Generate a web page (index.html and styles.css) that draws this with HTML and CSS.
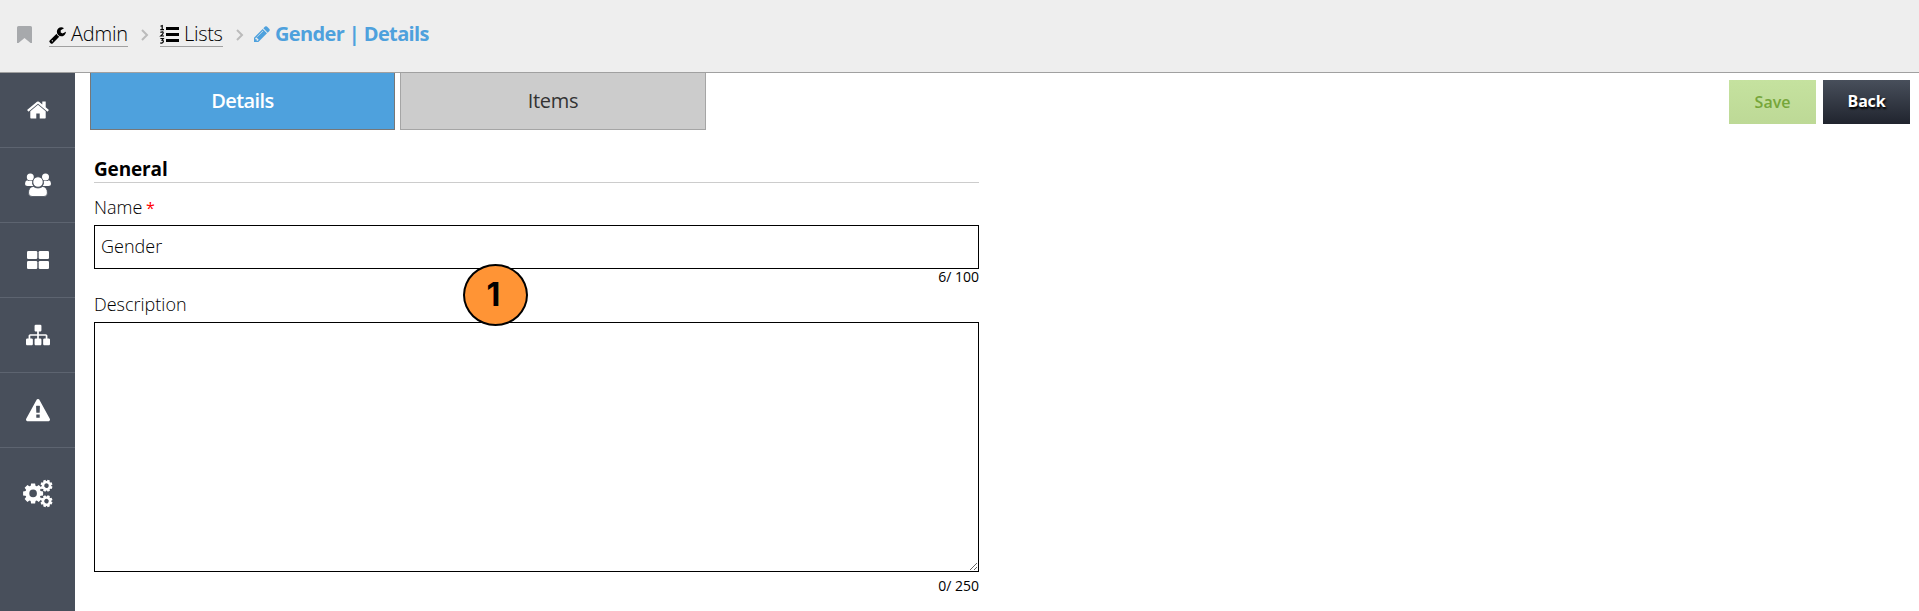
FILE: index.html
```html
<!DOCTYPE html>
<html lang="en">
<head>
<meta charset="utf-8">
<title>Gender | Details</title>
<link rel="stylesheet" href="styles.css">
</head>
<body>
<header class="topbar">
  <svg class="bookmark" viewBox="0 0 15 17"><path d="M1.5 0h12Q15 0 15 1.500V17h-1.500L7.500 12 1.500 17H0V1.500Q0 0 1.500 0z"/></svg>
  <nav class="crumbs">
    <a class="crumb crumb-admin"><svg class="ico" viewBox="64 0 1664 1792"><path d="M448 1472q0-26-19-45t-45-19-45 19-19 45 19 45 45 19 45-19 19-45zm644-420l-682 682q-37 37-90 37-52 0-91-37l-106-108q-38-36-38-90 0-53 38-91l681-681q39 98 114.500 173.500t173.500 114.500zm634-435q0 39-23 106-47 134-164.500 217.500t-258.500 83.500q-185 0-316.500-131.500t-131.500-316.500 131.500-316.500 316.500-131.500q58 0 121.500 16.500t107.500 46.500q16 11 16 28t-16 28l-293 169v224l193 107q5-3 79-48.500t135.500-81 70.500-35.500q15 0 23.500 10t8.500 25z"/></svg><span>Admin</span></a>
    <svg class="chev" viewBox="0 0 7 12"><path d="M1 1l5 5-5 5"/></svg>
    <a class="crumb crumb-lists"><svg class="ico-list" viewBox="0 0 19 19"><path d="M6 2h13v3H6zM6 8h13v3H6zM6 14h13v3H6z"/><path class="num" d="M.5 1.300L2.200.7V4.500M.3 4.700H4M.4 7.400Q3.400 6.200 3.200 8 3 9 .8 11H4M.4 13.500H3.300L2 15.200Q3.600 15.300 3.300 16.800 2.600 18.600.3 17.900"/></svg><span>Lists</span></a>
    <svg class="chev" viewBox="0 0 7 12"><path d="M1 1l5 5-5 5"/></svg>
    <span class="crumb-current"><svg class="ico-pencil" viewBox="128 128 1536 1536"><path d="M491 1536l91-91-235-235-91 91v107h128v128h107zm523-928q0-22-22-22-10 0-17 7l-542 542q-7 7-7 17 0 22 22 22 10 0 17-7l542-542q7-7 7-17zm-54-192l416 416-832 832h-416v-416zm683 96q0 53-37 90l-166 166-416-416 166-165q36-38 90-38 53 0 91 38l235 234q37 39 37 91z"/></svg><span>Gender | Details</span></span>
  </nav>
</header>
<div class="shell">
  <aside class="sidebar">
    <a class="side-item"><svg class="side-ico" viewBox="0 0 1792 1792"><path d="M1472 992v480q0 26-19 45t-45 19h-384v-384h-256v384h-384q-26 0-45-19t-19-45v-480q0-1 .5-3t.5-3l575-474 575 474q1 2 1 6zm223-69l-62 74q-8 9-21 11h-3q-13 0-21-7l-692-577-692 577q-12 8-24 7-13-2-21-11l-62-74q-8-10-7-23.500t11-21.500l719-599q32-26 76-26t76 26l244 204v-195q0-14 9-23t23-9h192q14 0 23 9t9 23v408l219 182q10 8 11 21.500t-7 23.500z"/></svg></a>
    <a class="side-item"><svg class="side-users" viewBox="0 0 26 24"><circle cx="5.300" cy="4" r="3.500"/><circle cx="20.500" cy="4" r="3.500"/><path d="M2 7.200Q4.500 8.800 7.300 7.600 6.600 11 8.300 13H2.500Q0 13 0 11 0 8 2 7.200zM24 7.200Q21.500 8.800 18.700 7.600 19.400 11 17.700 13H23.500Q26 13 26 11 26 8 24 7.200z"/><circle class="cut" cx="13" cy="9" r="5.200"/><path class="cut" d="M8.300 13.400Q13 16.600 17.700 13.400 22.400 14 22.400 20 22.400 23.500 19 23.500H7Q3.500 23.500 3.500 20 3.500 14 8.300 13.400z"/></svg></a>
    <a class="side-item"><svg class="side-grid" viewBox="0 0 22 18"><rect width="10.300" height="8" rx="1.300"/><rect x="11.700" width="10.300" height="8" rx="1.300"/><rect y="10" width="10.300" height="8" rx="1.300"/><rect x="11.700" y="10" width="10.300" height="8" rx="1.300"/></svg></a>
    <a class="side-item"><svg class="side-ico" viewBox="0 0 1792 1792"><path d="M1792 1248v320q0 40-28 68t-68 28h-320q-40 0-68-28t-28-68v-320q0-40 28-68t68-28h96v-192h-512v192h96q40 0 68 28t28 68v320q0 40-28 68t-68 28h-320q-40 0-68-28t-28-68v-320q0-40 28-68t68-28h96v-192h-512v192h96q40 0 68 28t28 68v320q0 40-28 68t-68 28h-320q-40 0-68-28t-28-68v-320q0-40 28-68t68-28h96v-192q0-52 38-90t90-38h512v-192h-96q-40 0-68-28t-28-68v-320q0-40 28-68t68-28h320q40 0 68 28t28 68v320q0 40-28 68t-68 28h-96v192h512q52 0 90 38t38 90v192h96q40 0 68 28t28 68z"/></svg></a>
    <a class="side-item side-item-alert"><svg class="side-ico" viewBox="0 0 1792 1792"><path d="M1024 1375v-190q0-14-9.500-23.500t-22.500-9.500h-192q-13 0-22.500 9.500t-9.500 23.500v190q0 14 9.500 23.500t22.500 9.500h192q13 0 22.500-9.500t9.500-23.500zm-2-374l18-459q0-12-10-19-13-11-24-11h-220q-11 0-24 11-10 7-10 21l17 457q0 10 10 16.500t24 6.500h185q14 0 23.500-6.500t10.500-16.500zm-14-934l768 1408q35 63-2 126-17 29-46.500 46t-63.500 17h-1536q-34 0-63.500-17t-46.500-46q-37-63-2-126l768-1408q17-31 47-49t65-18 65 18 47 49z"/></svg></a>
    <a class="side-item side-item-tall"><svg class="side-cogs" viewBox="0 0 30 27">
      <defs><g id="gear"><path d="M-2-10h4l.7 4h-5.400zM-2 10h4l.7-4h-5.400z"/><path transform="rotate(45)" d="M-2-10h4l.7 4h-5.400zM-2 10h4l.7-4h-5.400z"/><path transform="rotate(90)" d="M-2-10h4l.7 4h-5.400zM-2 10h4l.7-4h-5.400z"/><path transform="rotate(135)" d="M-2-10h4l.7 4h-5.400zM-2 10h4l.7-4h-5.400z"/><circle r="5.800" class="ring"/></g></defs>
      <use href="#gear" transform="translate(10.100 13.400)"/><use href="#gear" transform="translate(23.500 5.700) rotate(22) scale(.6)"/><use href="#gear" transform="translate(23.500 21.200) rotate(22) scale(.6)"/></svg></a>
  </aside>
  <main class="content">
    <div class="toolbar">
      <div class="tabs"><a class="tab tab-active">Details</a><a class="tab">Items</a></div>
      <div class="actions"><button class="btn btn-save">Save</button><button class="btn btn-back">Back</button></div>
    </div>
    <form class="form">
      <h2 class="section">General</h2>
      <label class="label label-name" for="name">Name <span class="req">*</span></label>
      <input class="input" id="name" value="Gender">
      <div class="count count-name">6/ 100</div>
      <label class="label label-desc" for="desc">Description</label>
      <textarea class="area" id="desc"></textarea>
      <div class="count count-desc">0/ 250</div>
      <div class="marker">1</div>
    </form>
  </main>
</div>
</body>
</html>
```
FILE: styles.css
```css
* { box-sizing: border-box; }
html, body { height: 100%; }
body { margin: 0; display: flex; flex-direction: column; background: #fff; color: #000; font-family: "Open Sans", "Noto Sans", sans-serif; font-size: 18px; overflow: hidden; }
svg { display: block; flex: none; overflow: visible; }
.topbar { height: 73px; flex: none; background: #eee; border-bottom: 1px solid #a0a0a0; display: flex; align-items: flex-start; padding-left: 17px; }
.bookmark { width: 15px; height: 17px; margin-top: 26px; fill: #a7a9ac; }
.crumbs { display: flex; align-items: flex-start; margin: 21px 0 0 17px; font-size: 20px; line-height: 26px; }
.crumb { display: flex; height: 26px; border-bottom: 1px solid #a0a0a0; font-weight: 330; }
.crumb-admin { width: 79px; gap: 5px; letter-spacing: -0.2px; }
.crumb-lists { width: 63px; gap: 5px; letter-spacing: -0.3px; }
.ico { width: 17px; height: 18px; margin-top: 5px; }
.ico-list { width: 19px; height: 19px; margin-top: 4px; }
.num { fill: none; stroke: #000; stroke-width: 1.2; }
.chev { width: 7px; height: 12px; margin: 8px 12px 0 13px; fill: none; stroke: #bbb; stroke-width: 2; }
.crumb-current { display: flex; gap: 5px; margin-left: -1px; color: #4ea1dd; font-weight: 700; letter-spacing: -0.63px; }
.ico-pencil { width: 16px; height: 16px; margin-top: 5px; fill: #4ea1dd; }
.shell { flex: 1; display: flex; min-height: 0; }
.sidebar { width: 75px; flex: none; background: #484f5b; }
.side-item { height: 75px; border-bottom: 1px solid #5d6470; display: flex; align-items: center; justify-content: center; fill: #fff; }
.side-item-alert { padding-top: 2px; }
.side-item-tall { height: 91px; border-bottom: 0; }
.side-ico { width: 24px; height: 24px; }
.side-users { width: 26px; height: 24px; }
.cut { stroke: #484f5b; stroke-width: .8; }
.side-grid { width: 22px; height: 18px; }
.side-cogs { width: 30px; height: 27px; }
.ring { fill: none; stroke: #fff; stroke-width: 4; }
.content { flex: 1; padding: 0 9px 0 15px; }
.toolbar { display: flex; justify-content: space-between; height: 57px; }
.tabs { display: flex; gap: 5px; }
.tab { width: 306px; height: 57px; border: 1px solid #a5a5a5; border-top: 0; background: #ccc; color: #333; font-size: 20px; font-weight: 500; line-height: 55px; letter-spacing: -0.3px; text-align: center; }
.tab-active { width: 305px; background: #4ea1dd; border-color: #777; color: #fff; font-weight: 600; letter-spacing: -0.6px; }
.actions { display: flex; gap: 7px; padding-top: 7px; }
.btn { width: 87px; height: 44px; padding: 0 0 1px; border: 0; font: 600 16px/42px "Open Sans", sans-serif; }
.btn-save { background: linear-gradient(#c5e29f, #bdd996); color: #76a63a; }
.btn-back { background: linear-gradient(#484f5b, #20242e); color: #fff; padding-bottom: 2px; font-weight: 700; letter-spacing: -0.2px; text-shadow: 1px 2px 2px #000; }
.form { position: relative; width: 885px; margin-left: 4px; display: flex; flex-direction: column; }
.section { margin: 26px 0 0; height: 27px; border-bottom: 1px solid #ccc; font-size: 19px; line-height: 26px; letter-spacing: -0.15px; }
.label { font-weight: 330; line-height: 26px; height: 26px; }
.label-name { margin-top: 11px; }
.label-desc { margin-top: 6px; }
.req { color: #f00; font-weight: 400; font-size: 16px; margin-left: -1px; }
.input { height: 44px; margin: 5px 0 0; padding: 0 6px 2px; border: 1px solid #000; font: 330 18px "Open Sans", sans-serif; }
.count { font-size: 14px; line-height: 16px; height: 16px; text-align: right; }
.area { height: 250px; margin: 5px 0 0; border: 1px solid #000; resize: both; }
.count-desc { margin-top: 6px; }
.marker { position: absolute; left: 369px; top: 134px; width: 65px; height: 62px; border: 2px solid #000; border-radius: 50%; background: #ff9435; font: 700 32px/58px "Inter", "Liberation Sans", sans-serif; text-align: center; padding-right: 4px; }
```
